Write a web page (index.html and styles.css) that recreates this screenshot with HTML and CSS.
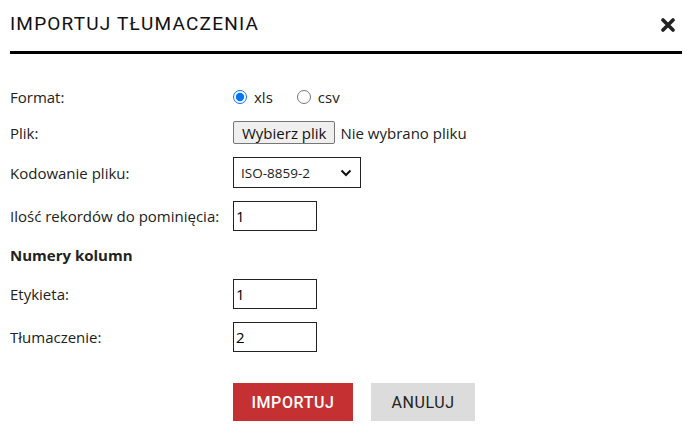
FILE: index.html
```html
<!DOCTYPE html>
<html lang="pl">
<head>
    <meta charset="UTF-8">
    <meta name="viewport" content="width=device-width, initial-scale=1.0">
    <title>Importuj tłumaczenia</title>
    <link rel="stylesheet" href="styles.css">
</head>
<body>
    <div class="modal">
        <!-- Nagłówek -->
        <header class="modal-header">
            <h1>IMPORTUJ TŁUMACZENIA</h1>
            <button type="button" class="close-btn" aria-label="Zamknij">
                <svg width="14" height="14" viewBox="0 0 14 14">
                    <path d="M2 2 L12 12 M12 2 L2 12" stroke="#222" stroke-width="3.6" stroke-linecap="round"/>
                </svg>
            </button>
        </header>

        <!-- Formularz -->
        <form class="import-form">
            <div class="form-row radio-row">
                <label class="form-label">Format:</label>
                <div class="form-field">
                    <label class="radio"><input type="radio" name="format" value="xls" checked> xls</label>
                    <label class="radio"><input type="radio" name="format" value="csv"> csv</label>
                </div>
            </div>
            <div class="form-row">
                <label class="form-label" for="file">Plik:</label>
                <div class="form-field">
                    <button type="button" class="file-btn">Wybierz plik</button>
                    <span class="file-name">Nie wybrano pliku</span>
                </div>
            </div>
            <div class="form-row">
                <label class="form-label" for="encoding">Kodowanie pliku:</label>
                <div class="form-field">
                    <div class="select-box" id="encoding">
                        <span>ISO-8859-2</span>
                        <svg width="12" height="8" viewBox="0 0 12 8">
                            <path d="M1.5 1.5 L6 6 L10.5 1.5" fill="none" stroke="#111" stroke-width="2"/>
                        </svg>
                    </div>
                </div>
            </div>
            <div class="form-row">
                <label class="form-label" for="skip">Ilość rekordów do pominięcia:</label>
                <div class="form-field">
                    <input type="text" class="text-input" id="skip" value="1">
                </div>
            </div>

            <h2 class="section-title">Numery kolumn</h2>

            <div class="form-row">
                <label class="form-label" for="col-label">Etykieta:</label>
                <div class="form-field">
                    <input type="text" class="text-input" id="col-label" value="1">
                </div>
            </div>
            <div class="form-row">
                <label class="form-label" for="col-trans">Tłumaczenie:</label>
                <div class="form-field">
                    <input type="text" class="text-input" id="col-trans" value="2">
                </div>
            </div>

            <div class="actions">
                <button type="button" class="btn btn-primary">IMPORTUJ</button>
                <button type="button" class="btn btn-secondary">ANULUJ</button>
            </div>
        </form>
    </div>
</body>
</html>
```

FILE: styles.css
```css
/* General */
body {
    margin: 0;
    background-color: #fff;
    color: #222;
    font-family: "Open Sans", "Noto Sans", sans-serif;
    font-size: 15px;
}

.modal {
    padding: 0 12px 0 10px;
}

/* Header */
.modal-header {
    display: flex;
    align-items: center;
    justify-content: space-between;
    height: 51px;
    border-bottom: 3px solid #000;
}

.modal-header h1 {
    margin: 0;
    font-family: Roboto, "Liberation Sans", sans-serif;
    font-size: 19px;
    font-weight: 400;
    letter-spacing: 1.2px;
    color: #111;
    padding-bottom: 4px;
}

.close-btn {
    border: none;
    background: none;
    padding: 0;
    margin-right: 7px;
    display: flex;
    cursor: pointer;
    padding-bottom: 2px;
}

/* Form */
.import-form {
    padding-top: 31px;
}

.form-row {
    display: flex;
    align-items: center;
    margin-bottom: 13px;
}

.radio-row {
    height: 23px;
}

.form-label {
    width: 223px;
    flex-shrink: 0;
}

.form-field {
    display: flex;
    align-items: center;
}

.radio {
    display: flex;
    align-items: center;
    margin-right: 24px;
}

.radio input {
    margin: 0 7px 0 0;
    width: 14px;
    height: 14px;
}

.file-btn {
    height: 23px;
    padding: 0 8px;
    font-family: "Open Sans", sans-serif;
    font-size: 15px;
    color: #111;
    background-color: #efefef;
    border: 1px solid #767676;
    border-radius: 2px;
}

.file-name {
    margin-left: 5px;
}

.select-box {
    box-sizing: border-box;
    width: 128px;
    height: 31px;
    border: 1px solid #222;
    display: flex;
    align-items: center;
    justify-content: space-between;
    padding: 0 8px 0 7px;
    font-size: 13.5px;
}

.text-input {
    box-sizing: border-box;
    width: 84px;
    height: 30px;
    border: 1px solid #222;
    padding: 0 2px;
    font-family: "Open Sans", sans-serif;
    font-size: 15px;
    color: #000;
}

.section-title {
    margin: 0 0 13px;
    height: 22px;
    line-height: 22px;
    font-size: 15px;
    font-weight: 700;
}

/* Buttons */
.actions {
    display: flex;
    gap: 18px;
    padding-left: 223px;
    padding-top: 18px;
}

.btn {
    height: 38px;
    border: none;
    font-family: Roboto, "Liberation Sans", sans-serif;
    font-size: 16px;
    letter-spacing: 0.6px;
    cursor: pointer;
}

.btn-primary {
    width: 120px;
    background-color: #c53032;
    color: #fff;
    font-weight: 500;
}

.btn-secondary {
    width: 104px;
    background-color: #dcdcdc;
    color: #222;
}
```
